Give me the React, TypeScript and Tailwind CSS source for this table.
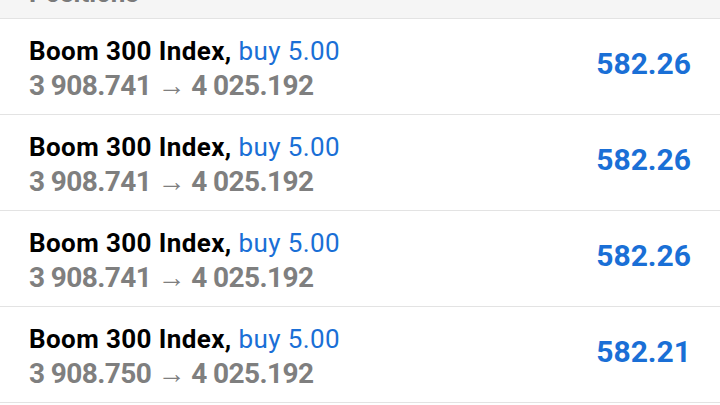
import React from "react"

const positions = [
  { symbol: "Boom 300 Index", side: "buy 5.00", open: "3 908.741", current: "4 025.192", profit: "582.26" },
  { symbol: "Boom 300 Index", side: "buy 5.00", open: "3 908.741", current: "4 025.192", profit: "582.26" },
  { symbol: "Boom 300 Index", side: "buy 5.00", open: "3 908.741", current: "4 025.192", profit: "582.26" },
  { symbol: "Boom 300 Index", side: "buy 5.00", open: "3 908.750", current: "4 025.192", profit: "582.21" },
]

export default function App() {
  return (
    <div className="h-[405px] w-[720px] overflow-hidden bg-white font-['Roboto',sans-serif]">
      {/* Section header, scrolled mostly out of view */}
      <div className="h-[19px] overflow-hidden border-b border-[#e3e3e3] bg-[#f5f5f5] px-[29px]">
        <div className="-mt-[24px] text-[26px] font-bold leading-[34px] text-[#7a7a7a]">Positions</div>
      </div>

      {/* Rows */}
      <ul>
        {positions.map((p, idx) => (
          <li key={idx} className="flex h-[96px] items-start justify-between border-b border-[#e3e3e3] pl-[29px] pr-[29px]">
            <div className="pt-[15px]">
              <div className="text-[26px] leading-[34px] tracking-[0.4px] text-black">
                <span className="font-bold">{p.symbol},</span>{" "}
                <span className="text-[#1a6fd6]">{p.side}</span>
              </div>
              <div className="text-[28px] font-bold leading-[36px] tracking-[-0.6px] text-[#7f7f7f]">
                {p.open} → {p.current}
              </div>
            </div>
            <div className="self-center pb-[5px] text-[30px] font-bold leading-none text-[#1a6fd6]">{p.profit}</div>
          </li>
        ))}
      </ul>
    </div>
  )
}
